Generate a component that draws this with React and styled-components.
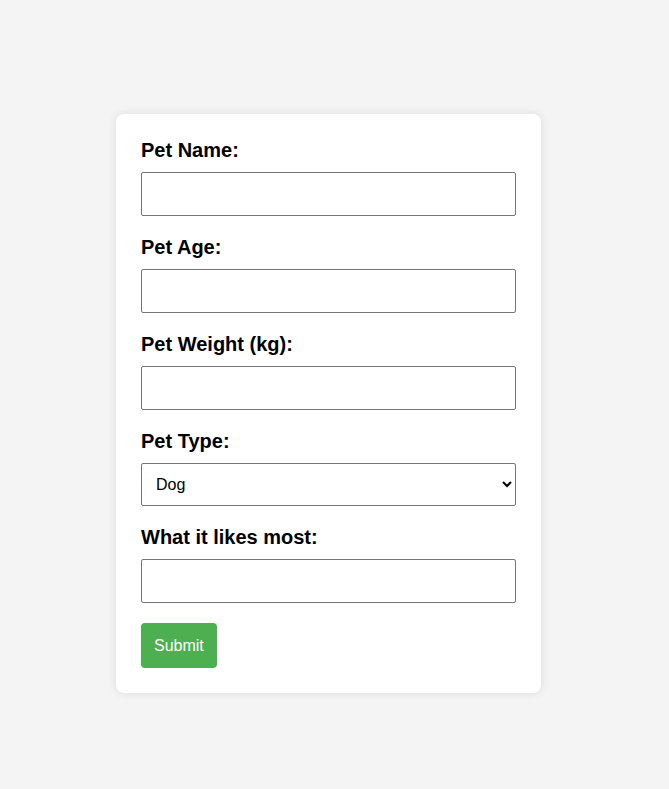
import styled, { createGlobalStyle } from "styled-components";

const GlobalStyle = createGlobalStyle`
  body {
    margin: 0;
    background-color: #f4f4f4;
    font-family: "Liberation Sans", Arial, sans-serif;
  }
`;

const StyledPage = styled.div`
  min-height: 100vh;
  box-sizing: border-box;
  display: flex;
  justify-content: center;
  align-items: center;
  padding: 18px 12px 0 0;
`;

const StyledForm = styled.form`
  width: 375px;
  padding: 25px;
  background-color: white;
  border-radius: 8px;
  box-shadow: 0 0 10px rgba(0, 0, 0, 0.1);
`;

const StyledLabel = styled.label`
  display: block;
  font-size: 20px;
  line-height: 22px;
  font-weight: bold;
  color: black;
  margin-bottom: 11px;
`;

const StyledInput = styled.input`
  display: block;
  width: 100%;
  box-sizing: border-box;
  height: 44px;
  padding: 12px;
  margin-bottom: 20px;
  font-size: 16px;
  font-family: "Liberation Sans", Arial, sans-serif;
  border: 1px solid #767676;
  border-radius: 2px;
`;

const StyledSelect = styled.select`
  display: block;
  width: 100%;
  box-sizing: border-box;
  height: 43px;
  padding: 0 10px;
  margin-bottom: 20px;
  font-size: 16px;
  font-family: "Liberation Sans", Arial, sans-serif;
  color: black;
  background-color: white;
  border: 1px solid #767676;
  border-radius: 2px;
`;

const StyledButton = styled.button`
  height: 45px;
  padding: 0 13px;
  border: none;
  border-radius: 4px;
  background-color: #4caf50;
  color: white;
  font-size: 16px;
  font-family: "Liberation Sans", Arial, sans-serif;
  cursor: pointer;
`;

const fields = [
  { id: "pet-name", label: "Pet Name:" },
  { id: "pet-age", label: "Pet Age:" },
  { id: "pet-weight", label: "Pet Weight (kg):" },
];

export default function App() {
  return (
    <>
      <GlobalStyle />
      <StyledPage>
        <StyledForm onSubmit={(event) => event.preventDefault()}>
          {fields.map((field) => (
            <div key={field.id}>
              <StyledLabel htmlFor={field.id}>{field.label}</StyledLabel>
              <StyledInput id={field.id} type="text" />
            </div>
          ))}
          <StyledLabel htmlFor="pet-type">Pet Type:</StyledLabel>
          <StyledSelect id="pet-type" defaultValue="dog">
            <option value="dog">Dog</option>
            <option value="cat">Cat</option>
            <option value="bird">Bird</option>
          </StyledSelect>
          <StyledLabel htmlFor="pet-likes">What it likes most:</StyledLabel>
          <StyledInput id="pet-likes" type="text" />
          <StyledButton type="submit">Submit</StyledButton>
        </StyledForm>
      </StyledPage>
    </>
  );
}
